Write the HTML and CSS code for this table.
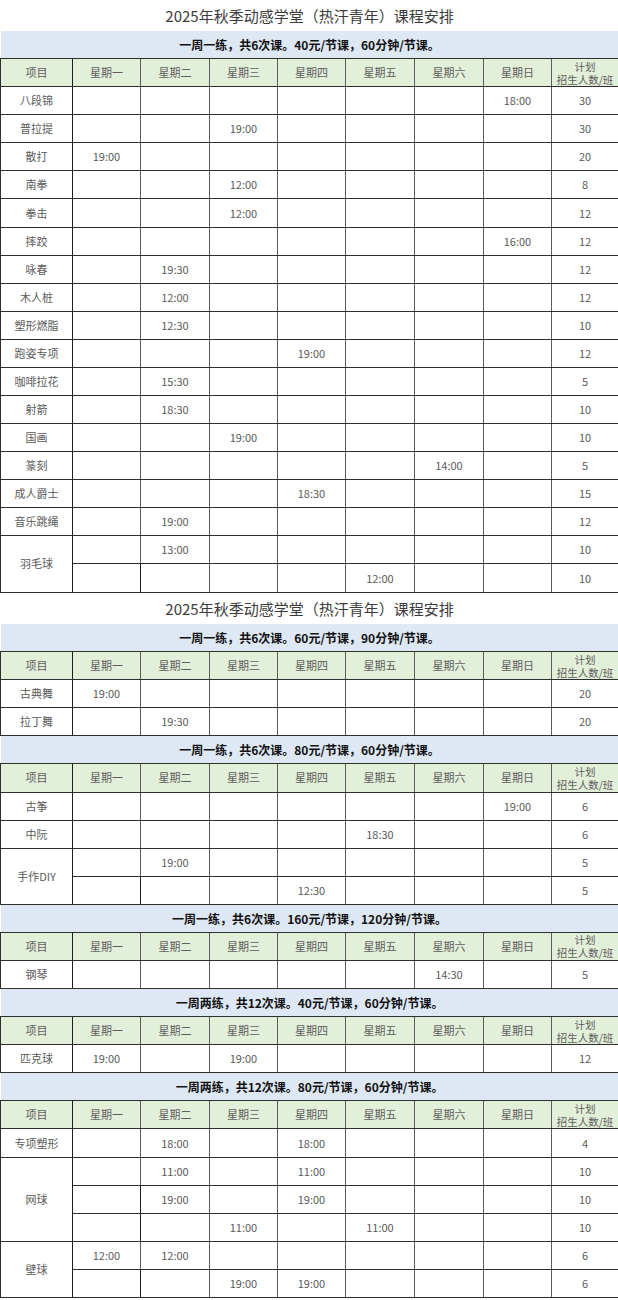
FILE: index.html
```html
<!DOCTYPE html>
<html lang="zh-CN">
<head>
<meta charset="utf-8">
<title>2025年秋季动感学堂（热汗青年）课程安排</title>
<link rel="stylesheet" href="styles.css">
</head>
<body>
<table class="sheet">
<colgroup>
<col class="c-name"><col class="c68"><col class="c69"><col class="c68"><col class="c68"><col class="c69"><col class="c69"><col class="c68"><col class="c67">
</colgroup>
<tbody>
<tr class="title"><td colspan="9">2025年秋季动感学堂（热汗青年）课程安排</td></tr>
<tr class="band"><td colspan="9">一周一练，共6次课。40元/节课，60分钟/节课。</td></tr>
<tr class="head"><td>项目</td><td>星期一</td><td>星期二</td><td>星期三</td><td>星期四</td><td>星期五</td><td>星期六</td><td>星期日</td><td class="plan">计划<br>招生人数/班</td></tr>
<tr><td>八段锦</td><td></td><td></td><td></td><td></td><td></td><td></td><td>18:00</td><td>30</td></tr>
<tr><td>普拉提</td><td></td><td></td><td>19:00</td><td></td><td></td><td></td><td></td><td>30</td></tr>
<tr><td>散打</td><td>19:00</td><td></td><td></td><td></td><td></td><td></td><td></td><td>20</td></tr>
<tr><td>南拳</td><td></td><td></td><td>12:00</td><td></td><td></td><td></td><td></td><td>8</td></tr>
<tr><td>拳击</td><td></td><td></td><td>12:00</td><td></td><td></td><td></td><td></td><td>12</td></tr>
<tr><td>摔跤</td><td></td><td></td><td></td><td></td><td></td><td></td><td>16:00</td><td>12</td></tr>
<tr><td>咏春</td><td></td><td>19:30</td><td></td><td></td><td></td><td></td><td></td><td>12</td></tr>
<tr><td>木人桩</td><td></td><td>12:00</td><td></td><td></td><td></td><td></td><td></td><td>12</td></tr>
<tr><td>塑形燃脂</td><td></td><td>12:30</td><td></td><td></td><td></td><td></td><td></td><td>10</td></tr>
<tr><td>跑姿专项</td><td></td><td></td><td></td><td>19:00</td><td></td><td></td><td></td><td>12</td></tr>
<tr><td>咖啡拉花</td><td></td><td>15:30</td><td></td><td></td><td></td><td></td><td></td><td>5</td></tr>
<tr><td>射箭</td><td></td><td>18:30</td><td></td><td></td><td></td><td></td><td></td><td>10</td></tr>
<tr><td>国画</td><td></td><td></td><td>19:00</td><td></td><td></td><td></td><td></td><td>10</td></tr>
<tr><td>篆刻</td><td></td><td></td><td></td><td></td><td></td><td>14:00</td><td></td><td>5</td></tr>
<tr><td>成人爵士</td><td></td><td></td><td></td><td>18:30</td><td></td><td></td><td></td><td>15</td></tr>
<tr><td>音乐跳绳</td><td></td><td>19:00</td><td></td><td></td><td></td><td></td><td></td><td>12</td></tr>
<tr><td rowspan="2">羽毛球</td><td></td><td>13:00</td><td></td><td></td><td></td><td></td><td></td><td>10</td></tr>
<tr><td></td><td></td><td></td><td></td><td>12:00</td><td></td><td></td><td>10</td></tr>

<tr class="title second"><td colspan="9">2025年秋季动感学堂（热汗青年）课程安排</td></tr>
<tr class="band"><td colspan="9">一周一练，共6次课。60元/节课，90分钟/节课。</td></tr>
<tr class="head"><td>项目</td><td>星期一</td><td>星期二</td><td>星期三</td><td>星期四</td><td>星期五</td><td>星期六</td><td>星期日</td><td class="plan">计划<br>招生人数/班</td></tr>
<tr><td>古典舞</td><td>19:00</td><td></td><td></td><td></td><td></td><td></td><td></td><td>20</td></tr>
<tr><td>拉丁舞</td><td></td><td>19:30</td><td></td><td></td><td></td><td></td><td></td><td>20</td></tr>

<tr class="band"><td colspan="9">一周一练，共6次课。80元/节课，60分钟/节课。</td></tr>
<tr class="head"><td>项目</td><td>星期一</td><td>星期二</td><td>星期三</td><td>星期四</td><td>星期五</td><td>星期六</td><td>星期日</td><td class="plan">计划<br>招生人数/班</td></tr>
<tr><td>古筝</td><td></td><td></td><td></td><td></td><td></td><td></td><td>19:00</td><td>6</td></tr>
<tr><td>中阮</td><td></td><td></td><td></td><td></td><td>18:30</td><td></td><td></td><td>6</td></tr>
<tr><td rowspan="2">手作DIY</td><td></td><td>19:00</td><td></td><td></td><td></td><td></td><td></td><td>5</td></tr>
<tr><td></td><td></td><td></td><td>12:30</td><td></td><td></td><td></td><td>5</td></tr>

<tr class="band"><td colspan="9">一周一练，共6次课。160元/节课，120分钟/节课。</td></tr>
<tr class="head"><td>项目</td><td>星期一</td><td>星期二</td><td>星期三</td><td>星期四</td><td>星期五</td><td>星期六</td><td>星期日</td><td class="plan">计划<br>招生人数/班</td></tr>
<tr><td>钢琴</td><td></td><td></td><td></td><td></td><td></td><td>14:30</td><td></td><td>5</td></tr>

<tr class="band"><td colspan="9">一周两练，共12次课。40元/节课，60分钟/节课。</td></tr>
<tr class="head"><td>项目</td><td>星期一</td><td>星期二</td><td>星期三</td><td>星期四</td><td>星期五</td><td>星期六</td><td>星期日</td><td class="plan">计划<br>招生人数/班</td></tr>
<tr><td>匹克球</td><td>19:00</td><td></td><td>19:00</td><td></td><td></td><td></td><td></td><td>12</td></tr>

<tr class="band"><td colspan="9">一周两练，共12次课。80元/节课，60分钟/节课。</td></tr>
<tr class="head"><td>项目</td><td>星期一</td><td>星期二</td><td>星期三</td><td>星期四</td><td>星期五</td><td>星期六</td><td>星期日</td><td class="plan">计划<br>招生人数/班</td></tr>
<tr><td>专项塑形</td><td></td><td>18:00</td><td></td><td>18:00</td><td></td><td></td><td></td><td>4</td></tr>
<tr><td rowspan="3">网球</td><td></td><td>11:00</td><td></td><td>11:00</td><td></td><td></td><td></td><td>10</td></tr>
<tr><td></td><td>19:00</td><td></td><td>19:00</td><td></td><td></td><td></td><td>10</td></tr>
<tr><td></td><td></td><td>11:00</td><td></td><td>11:00</td><td></td><td></td><td>10</td></tr>
<tr><td rowspan="2">壁球</td><td>12:00</td><td>12:00</td><td></td><td></td><td></td><td></td><td></td><td>6</td></tr>
<tr><td></td><td></td><td>19:00</td><td>19:00</td><td></td><td></td><td></td><td>6</td></tr>
</tbody>
</table>
</body>
</html>
```

FILE: styles.css
```css
html, body {
  margin: 0;
  padding: 0;
  background: #ffffff;
}

body {
  font-family: "Noto Sans CJK SC", "Noto Sans", sans-serif;
  color: #555;
}

.sheet {
  border-collapse: collapse;
  table-layout: fixed;
  width: 618px;
}

.c-name { width: 72px; }
.c68 { width: 68px; }
.c69 { width: 69px; }
.c67 { width: 67px; }

.sheet td {
  border: 1px solid #2e2e2e;
  border-left-color: #5c5c5c;
  border-right-color: #5c5c5c;
  height: 27.08px;
  padding: 0;
  text-align: center;
  vertical-align: middle;
  font-size: 11px;
  line-height: 13px;
  color: #5a5a5a;
  white-space: nowrap;
}

.sheet td:first-child {
  border-right-color: #1e1e1e;
  border-left-color: #2e2e2e;
}

.sheet tr.title td {
  height: 31px;
  border-left: none;
  border-right: none;
  border-top: none;
  border-bottom: none;
  font-size: 15px;
  color: #3c3c3c;
  background: #ffffff;
}

.sheet tr.title.second td {
  border-top: 1px solid #2e2e2e;
  height: 31.5px;
}

.sheet tr.band td {
  border-left: none;
  border-right: none;
  border-top: none;
  background: #dde8f4;
  font-size: 12px;
  font-weight: bold;
  color: #111;
}

.sheet tr.head td {
  background: #e2efd9;
  color: #5e5e5e;
}

.sheet tr.head td.plan {
  line-height: 13px;
  font-size: 10.5px;
  white-space: normal;
}
```
